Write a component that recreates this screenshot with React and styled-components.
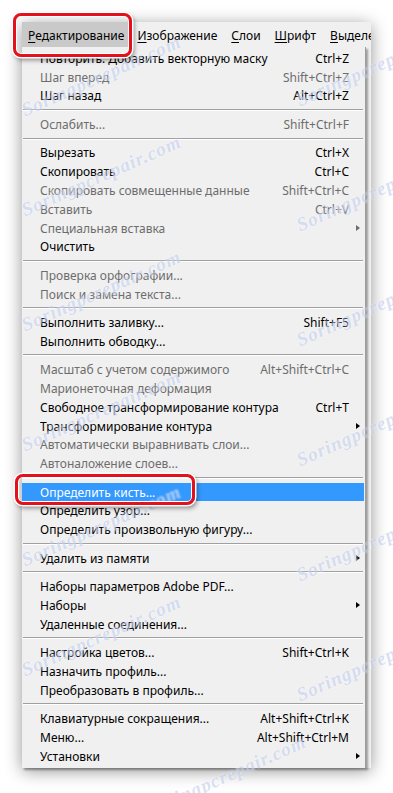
import styled, { createGlobalStyle } from "styled-components";

const GlobalStyle = createGlobalStyle`
    html, body {
        margin: 0;
        padding: 0;
        background: #ffffff;
    }
    body {
        font-family: "Noto Sans", "Open Sans", sans-serif;
        font-size: 12px;
    }
`;

const Page = styled.div`
    position: relative;
    width: 393px;
    height: 793px;
    overflow: hidden;
    padding: 22px 0 0 22px;
    box-sizing: border-box;
`;

const Window = styled.div`
    width: 349px;
    display: flex;
    flex-direction: column;
    box-shadow: 0 3px 16px rgba(0, 0, 0, 0.42);
    background: #f0f0f0;
`;

const MenuBar = styled.div`
    display: flex;
    flex-direction: row;
    height: 25px;
    background: #f0f0f0;
    white-space: nowrap;
    overflow: hidden;
`;

const BarItem = styled.div`
    display: flex;
    align-items: center;
    padding: ${(p) => (p.$first ? "0 6px" : "0 7px")};
    padding-top: 1px;
    background: ${(p) => (p.$active ? "#c9c9c9" : "transparent")};
    color: #000;

    & u {
        text-decoration: underline;
        text-underline-offset: 2px;
    }
`;

const Dropdown = styled.div`
    width: 343px;
    padding: 2px 0;
    background: #f0f0f0;
    border-right: 1px solid #9c9c9c;
    box-shadow: 2px 2px 2px rgba(0, 0, 0, 0.35);
`;

const Row = styled.div`
    display: grid;
    grid-template-columns: 1fr auto 16px;
    align-items: center;
    height: 18.8px;
    padding-left: 18px;
    margin-right: ${(p) => (p.$selected ? "1px" : "0")};
    color: ${(p) => (p.$selected ? "#ffffff" : p.$disabled ? "#6d6d6d" : "#000000")};
    background: ${(p) => (p.$selected ? "#3399ff" : "transparent")};
    white-space: nowrap;
`;

const Label = styled.span`
    overflow: hidden;
`;

const Shortcut = styled.span`
    text-align: right;
    padding-left: 12px;
`;

const Arrow = styled.span`
    justify-self: center;
    width: 0;
    height: 0;
    margin-left: 2px;
    border-top: 3.5px solid transparent;
    border-bottom: 3.5px solid transparent;
    border-left: 4px solid ${(p) => (p.$disabled ? "#6d6d6d" : "#000000")};
`;

const Separator = styled.div`
    height: 9.64px;
    display: flex;
    align-items: center;
    padding: 0 2px 0 1px;

    &::after {
        content: "";
        flex: 1;
        height: 1px;
        background: #a0a0a0;
        border-bottom: 1px solid #ffffff;
    }
`;

const RedFrame = styled.div`
    position: absolute;
    left: ${(p) => p.$x}px;
    top: ${(p) => p.$y}px;
    width: ${(p) => p.$w}px;
    height: ${(p) => p.$h}px;
    box-sizing: border-box;
    border: 3px solid #e2111b;
    border-radius: 8px;
    box-shadow: 0 0 0 1.5px #ffffff, inset 0 0 0 1px #ffffff, 2px 3px 5px rgba(0, 0, 0, 0.45);
    pointer-events: none;
`;

const Watermark = styled.div`
    position: absolute;
    left: ${(p) => p.$x}px;
    top: ${(p) => p.$y}px;
    transform: rotate(-24deg);
    transform-origin: center;
    font-family: "Liberation Serif", serif;
    font-style: italic;
    font-weight: bold;
    font-size: 19px;
    letter-spacing: 1px;
    color: rgba(135, 160, 225, 0.33);
    text-shadow: 0 0 2px rgba(255, 255, 255, 0.7);
    white-space: nowrap;
    pointer-events: none;
`;

const bar = [
    { first: "Р", rest: "едактирование", active: true },
    { first: "И", rest: "зображение" },
    { first: "С", rest: "лои" },
    { first: "Ш", rest: "рифт" },
    { first: "В", rest: "ыделение" },
];

const items = [
    { label: "Повторить: Добавить векторную маску", keys: "Ctrl+Z" },
    { label: "Шаг вперед", keys: "Shift+Ctrl+Z", off: true },
    { label: "Шаг назад", keys: "Alt+Ctrl+Z" },
    "sep",
    { label: "Ослабить...", keys: "Shift+Ctrl+F", off: true },
    "sep",
    { label: "Вырезать", keys: "Ctrl+X" },
    { label: "Скопировать", keys: "Ctrl+C" },
    { label: "Скопировать совмещенные данные", keys: "Shift+Ctrl+C", off: true },
    { label: "Вставить", keys: "Ctrl+V", off: true },
    { label: "Специальная вставка", sub: true, off: true },
    { label: "Очистить" },
    "sep",
    { label: "Проверка орфографии...", off: true },
    { label: "Поиск и замена текста...", off: true },
    "sep",
    { label: "Выполнить заливку...", keys: "Shift+F5" },
    { label: "Выполнить обводку..." },
    "sep",
    { label: "Масштаб с учетом содержимого", keys: "Alt+Shift+Ctrl+C", off: true },
    { label: "Марионеточная деформация", off: true },
    { label: "Свободное трансформирование контура", keys: "Ctrl+T" },
    { label: "Трансформирование контура", sub: true },
    { label: "Автоматически выравнивать слои...", off: true },
    { label: "Автоналожение слоев...", off: true },
    "sep",
    { label: "Определить кисть...", selected: true },
    { label: "Определить узор..." },
    { label: "Определить произвольную фигуру..." },
    "sep",
    { label: "Удалить из памяти", sub: true },
    "sep",
    { label: "Наборы параметров Adobe PDF..." },
    { label: "Наборы", sub: true },
    { label: "Удаленные соединения..." },
    "sep",
    { label: "Настройка цветов...", keys: "Shift+Ctrl+K" },
    { label: "Назначить профиль..." },
    { label: "Преобразовать в профиль..." },
    "sep",
    { label: "Клавиатурные сокращения...", keys: "Alt+Shift+Ctrl+K" },
    { label: "Меню...", keys: "Alt+Shift+Ctrl+M" },
    { label: "Установки", sub: true },
];

// watermark spots, left column and right column
const marks = [
    [15, 65], [290, 55], [15, 165], [290, 180], [15, 280], [290, 295],
    [15, 400], [290, 415], [15, 515], [290, 530], [15, 625], [290, 650], [140, 765],
];

export default function App() {
    return (
        <Page>
            <GlobalStyle />
            <Window>
                <MenuBar>
                    {bar.map((b, i) => (
                        <BarItem key={i} $active={b.active} $first={i === 0}>
                            <u>{b.first}</u>
                            {b.rest}
                        </BarItem>
                    ))}
                </MenuBar>
                <Dropdown>
                    {items.map((it, i) =>
                        it === "sep" ? (
                            <Separator key={i} />
                        ) : (
                            <Row key={i} $disabled={it.off} $selected={it.selected}>
                                <Label>{it.label}</Label>
                                <Shortcut>{it.keys || ""}</Shortcut>
                                {it.sub ? <Arrow $disabled={it.off} /> : <span />}
                            </Row>
                        )
                    )}
                </Dropdown>
            </Window>
            {marks.map(([x, y], i) => (
                <Watermark key={i} $x={x} $y={y}>
                    Soringpcrepair.com
                </Watermark>
            ))}
            <RedFrame $x={13} $y={13} $w={119} $h={44} />
            <RedFrame $x={15} $y={474} $w={180} $h={31} />
        </Page>
    );
}
